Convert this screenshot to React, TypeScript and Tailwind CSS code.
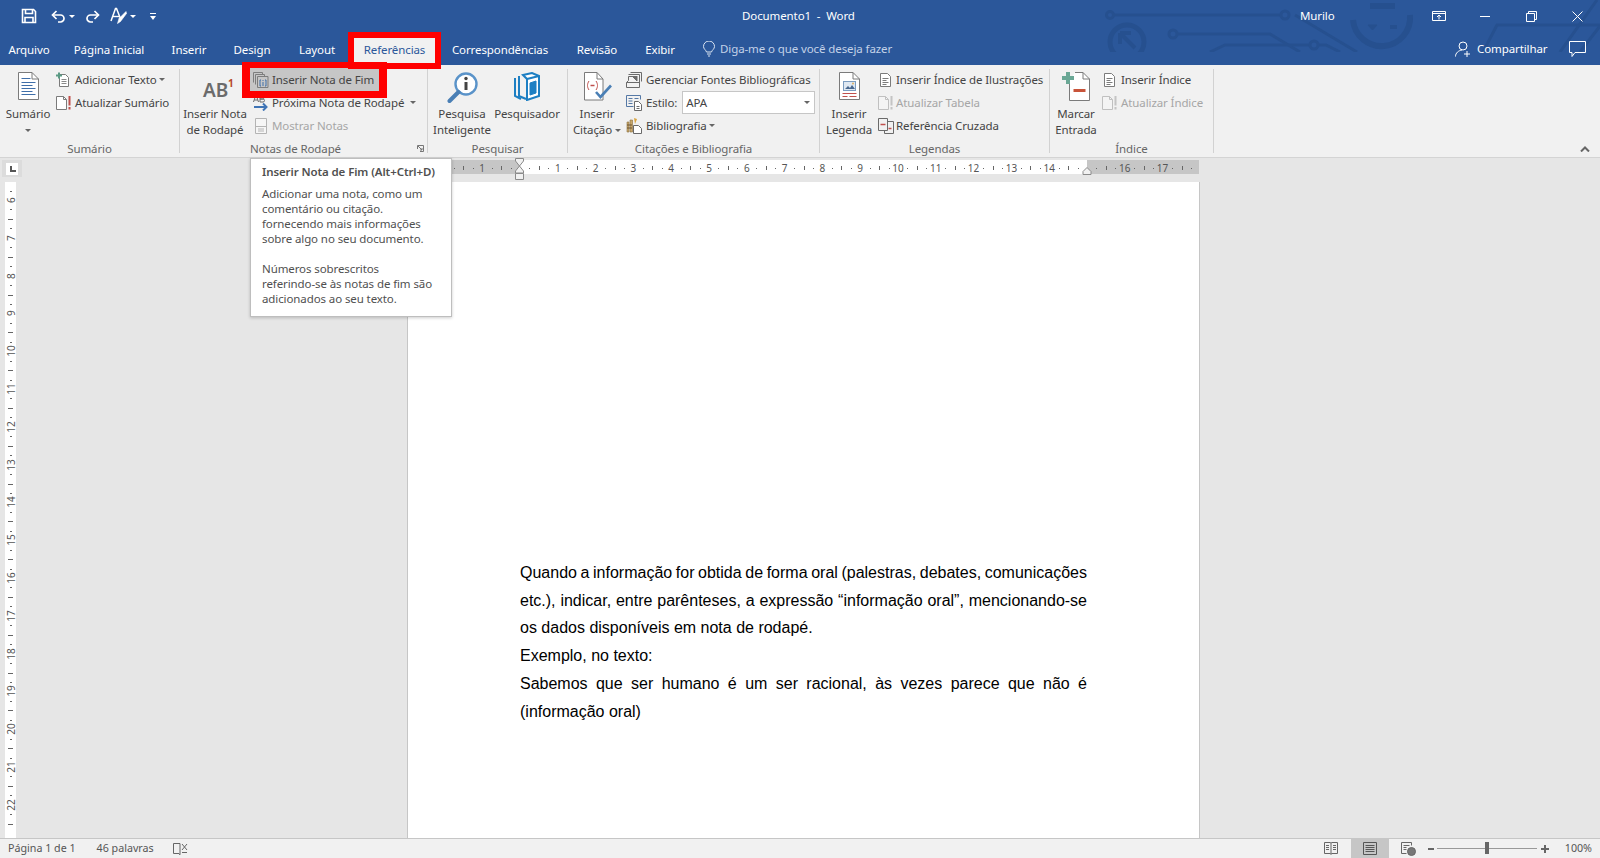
import type { ReactNode } from "react";

const GRAY = "#7b7b7b";

function SaveIcon() {
  return (
    <svg width="16" height="16" viewBox="0 0 16 16" fill="none" stroke="#fff" strokeWidth="1.6">
      <path d="M1.5 1.5h11l2 2v11h-13z" />
      <path d="M4.5 1.5v4h7v-4" />
      <path d="M4 14.5v-5h8v5" />
    </svg>
  );
}

function UndoIcon({ flip }: { flip?: boolean }) {
  return (
    <svg width="15" height="13" viewBox="0 0 15 13" fill="none" stroke="#fff" strokeWidth="1.7" className={flip ? "-scale-x-100" : ""}>
      <path d="M5.5 1 1.5 5l4 4" />
      <path d="M2 5h7.5a3.5 3.5 0 0 1 0 7H7" />
    </svg>
  );
}

function FontBrushIcon() {
  return (
    <svg width="17" height="19" viewBox="0 0 17 19" fill="none" stroke="#fff">
      <path d="M1 14 5.5 1.5h1L11 13" strokeWidth="1.5" />
      <path d="M3 9.5h6" strokeWidth="1.4" />
      <path d="M16 4.5 9 11.5l-1.5 5 3-2 6-8z" fill="#fff" strokeWidth=".6" />
    </svg>
  );
}

function Caret({ color = "#666" }: { color?: string }) {
  return (
    <svg width="6" height="3" viewBox="0 0 6 3" className="shrink-0">
      <path d="M0 0h6L3 3z" fill={color} />
    </svg>
  );
}

function DocIcon({ w = 21, h = 28, children }: { w?: number; h?: number; children?: ReactNode }) {
  return (
    <svg width={w} height={h} viewBox={`0 0 ${w} ${h}`} fill="none">
      <path d={`M.5.5H${w - 7}L${w - 0.5} 7V${h - 0.5}H.5z`} fill="#fff" stroke={GRAY} />
      <path d={`M${w - 7} .5V7H${w - 0.5}`} stroke={GRAY} />
      {children}
    </svg>
  );
}

function SumarioIcon() {
  return (
    <DocIcon>
      <path d="M3.5 6.5h9M3.5 10.5h14M3.5 13.5h11M3.5 16.5h14M3.5 19.5h11M3.5 22.5h14" stroke="#3f6ea8" />
    </DocIcon>
  );
}

function SmallDoc({ children }: { children?: ReactNode }) {
  return (
    <svg width="16" height="16" viewBox="0 0 16 16" fill="none">
      <path d="M3.5 2.5h6l3 3v9h-9z" fill="#fff" stroke={GRAY} />
      <path d="M5.5 7.5h5M5.5 9.5h5M5.5 11.5h5" stroke="#8a8a8a" />
      {children}
    </svg>
  );
}

function AddTextIcon() {
  return (
    <SmallDoc>
      <path d="M0 3.5h6M3 .5v6" stroke="#5a9a84" strokeWidth="2" />
    </SmallDoc>
  );
}

function RefreshDocIcon({ disabled }: { disabled?: boolean }) {
  const line = disabled ? "#c0c0c0" : GRAY;
  return (
    <svg width="16" height="16" viewBox="0 0 16 16" fill="none">
      <path d="M.5 1.5h7l3 3v10H.5z" fill={disabled ? "#f4f4f4" : "#fff"} stroke={line} />
      <path d="M7.5 1.5v3h3" stroke={line} />
      <path d="M13.5 1v9.5M13.5 12v2.5" stroke={disabled ? "#c4c4c4" : "#c0504d"} strokeWidth="2" />
    </svg>
  );
}

function EndnoteIcon() {
  return (
    <svg width="16" height="16" viewBox="0 0 16 16" fill="none">
      <path d="M.5.5h9v2M2.500 2.500h9v2M4.500 4.500h10.500v11h-10.500z" stroke="#7d7d7d" />
      <path d="M.5.5v10M2.500 2.500v10" stroke="#7d7d7d" />
      <path d="M8 8H7v6h1M12 8h1v6h-1" stroke="#3f6ea8" />
      <path d="M10 8v1M10 10v4" stroke="#3f6ea8" />
    </svg>
  );
}

function NextNoteIcon() {
  return (
    <svg width="16" height="16" viewBox="0 0 16 16" fill="none">
      <path d="M.5 7 2.500 1h1L5.500 7M1.300 5h3.400" stroke="#6a6a6a" />
      <path d="M7 1h2.500a1.500 1.500 0 0 1 0 3H7zM7 4h3a1.500 1.500 0 0 1 0 3H7z" stroke="#6a6a6a" />
      <path d="M1 12h12M10 8.500l3.500 3.500-3.500 3.500" stroke="#3f74b5" strokeWidth="2" />
    </svg>
  );
}

function ShowNotesIcon() {
  return (
    <svg width="16" height="16" viewBox="0 0 16 16" fill="none" stroke="#b4b4b4">
      <path d="M2.500.5h11v15h-11z" fill="#f6f6f6" />
      <path d="M2.500 8.500h11M5 11h6M5 13h6" />
    </svg>
  );
}

function SmartLookupIcon() {
  return (
    <svg width="31" height="32" viewBox="0 0 31 32" fill="none">
      <circle cx="19" cy="12" r="10.500" fill="#fff" stroke="#5a93c9" strokeWidth="2.400" />
      <path d="M11.500 20 2.500 29" stroke="#4a7fb5" strokeWidth="4" strokeLinecap="round" />
      <circle cx="19" cy="6.500" r="1.700" fill="#444" />
      <path d="M19 10v8" stroke="#444" strokeWidth="3" />
    </svg>
  );
}

function ResearcherIcon() {
  return (
    <svg width="26" height="29" viewBox="0 0 26 29" fill="none" stroke="#1d7fc3" strokeWidth="2">
      <path d="M1 6v18l6 3" />
      <path d="M5 4v20l7 3" />
      <path d="M9 3 18 1l7 3v20l-12 4V7z" fill="#fff" />
      <path d="M13 7l12-3" />
      <path d="M16 11l6-2v12l-6 2z" fill="#1d7fc3" strokeWidth="1" />
    </svg>
  );
}

function CitationIcon() {
  return (
    <svg width="29" height="29" viewBox="0 0 29 29" fill="none">
      <path d="M1.500.5H14l6 6.500v21H1.500z" fill="#fff" stroke={GRAY} />
      <path d="M14 .5V7h6" stroke={GRAY} />
      <path d="M6 9c-2 3-2 6 0 9M13 9c2 3 2 6 0 9" stroke="#c0504d" />
      <path d="M7.500 13.500h4" stroke="#c0504d" strokeWidth="1.500" />
      <path d="M13 20l4.500 5L28 13.500" stroke="#4a7fb5" strokeWidth="2.600" />
    </svg>
  );
}

function ManageSourcesIcon() {
  return (
    <svg width="16" height="16" viewBox="0 0 16 16" fill="none" stroke="#6a6a6a">
      <path d="M4.500.500h11v9M2.500 2.500h11v9" />
      <path d="M.5 10.500h13v5H.5zM.5 10.500l2-2V4.500h9" />
      <path d="M7 5h4v4z" fill="#6a6a6a" />
    </svg>
  );
}

function StyleIcon() {
  return (
    <svg width="16" height="16" viewBox="0 0 16 16" fill="none">
      <path d="M.5.500h14v4M.5.500v11h7" stroke="#5578a5" />
      <path d="M2.500 3.500h4M2.500 6h4M2.500 8.500h4M8.500 3.500h4" stroke="#5578a5" />
      <path d="M8.500 6.500h4l3 3v6h-7z" fill="#fff" stroke="#6a6a6a" />
      <path d="M10.500 11.500h3M10.500 13.500h3" stroke="#6a6a6a" />
    </svg>
  );
}

function BibliographyIcon() {
  return (
    <svg width="16" height="17" viewBox="0 0 16 17" fill="none">
      <path d="M1 5h2v10H1zM4 3h2.500v12H4z" fill="#c9a86b" stroke="#8a6f3f" strokeWidth=".6" />
      <path d="M8 1l3 1-2 5z" fill="#d9a441" />
      <path d="M1 8h5M1 11h5" stroke="#6b5330" />
      <path d="M7.500 8.500h5l3 3v5h-8z" fill="#fff" stroke="#6a6a6a" />
    </svg>
  );
}

function CaptionIcon() {
  return (
    <DocIcon>
      <rect x="4.500" y="9.500" width="12" height="9" fill="#dfe8f2" stroke="#7c9cc0" />
      <path d="M6 17l3-3 2 2 2-3 3 4z" fill="#47678f" />
      <circle cx="14" cy="11.500" r="1" fill="#e0b060" />
      <path d="M3.500 21.500h14M3.500 24.500h5M10.500 24.500h7" stroke="#c0504d" />
    </DocIcon>
  );
}

function FigureIndexIcon() {
  return (
    <svg width="16" height="16" viewBox="0 0 16 16" fill="none" stroke={GRAY}>
      <path d="M2.500 1.500h7l3 3v10h-10z" fill="#fff" />
      <path d="M4.500 6.500h6M4.500 8.500h4M4.500 10.500h6M4.500 12.500h4" />
    </svg>
  );
}

function CrossRefIcon() {
  return (
    <svg width="16" height="16" viewBox="0 0 16 16" fill="none" stroke="#6a6a6a">
      <path d="M.5.500h9v12H.5z" />
      <path d="M9.500 3.500h6v12h-9v-3" />
      <path d="M2.500 6.500h5" stroke="#c0504d" strokeWidth="1.500" />
      <path d="M10.500 10.500h3" stroke="#c0504d" strokeWidth="1.500" />
    </svg>
  );
}

function MarkEntryIcon() {
  return (
    <svg width="28" height="29" viewBox="0 0 28 29" fill="none">
      <path d="M7.500 8V28.500H27.500V7L21 .5H13" fill="#fff" stroke={GRAY} />
      <path d="M21 .5V7h6.500" stroke={GRAY} />
      <path d="M0 6h12M6 0v12" stroke="#6aa795" strokeWidth="4" />
      <path d="M11.500 18.500h12" stroke="#c8543a" strokeWidth="3" />
    </svg>
  );
}

function LargeButton({ w, icon, lines, caret }: { w: string; icon: ReactNode; lines: string[]; caret?: "inline" | "below" }) {
  return (
    <div className={`${w} flex h-[70px] shrink-0 flex-col items-center`}>
      <div className="flex h-[38px] items-start pt-1">{icon}</div>
      {lines.map((line, i) => (
        <div key={line} className="flex h-4 items-center gap-[3px] whitespace-nowrap leading-4">
          {line}
          {caret === "inline" && i === lines.length - 1 && <Caret />}
        </div>
      ))}
      {caret === "below" && (
        <div className="flex h-4 items-center">
          <Caret />
        </div>
      )}
    </div>
  );
}

function SmallButton({ icon, label, gap, disabled, caret, className }: { icon: ReactNode; label: string; gap: string; disabled?: boolean; caret?: boolean; className?: string }) {
  return (
    <div className={`flex h-[23px] items-center whitespace-nowrap ${disabled ? "text-[#a6a6a6]" : ""} ${className ?? ""}`}>
      <div className="flex w-4 shrink-0 items-center justify-center">{icon}</div>
      <span className={gap}>{label}</span>
      {caret && (
        <span className="ml-[2px]">
          <Caret />
        </span>
      )}
    </div>
  );
}

function Group({ w, label, children, launcher }: { w: string; label: string; children: ReactNode; launcher?: boolean }) {
  return (
    <div className={`${w} flex h-[89px] shrink-0`}>
      <div className="relative flex min-w-0 flex-1 flex-col">
        <div className="flex h-[69px]">{children}</div>
        <div className={`flex h-[20px] items-center justify-center whitespace-nowrap pt-[3px] text-[#666] ${launcher ? "pr-[16px]" : ""}`}>{label}</div>
        {launcher && (
          <svg width="7" height="7" viewBox="0 0 7 7" className="absolute right-[3px] bottom-[5px]" fill="none" stroke="#777">
            <path d="M.5 4V.5H6.500V6.500H3" />
            <path d="M1 1l4 4M5 3v2H3" />
          </svg>
        )}
      </div>
      <div className="mt-[1px] h-[84px] w-px bg-[#d2d2d2]" />
    </div>
  );
}

function Circuit() {
  return (
    <svg width="520" height="52" viewBox="0 0 520 52" fill="none" stroke="#26508f" strokeWidth="3" className="absolute top-0 right-0">
      <circle cx="30" cy="15" r="3.500" />
      <path d="M34 15H201" />
      <circle cx="205" cy="15" r="4" />
      <circle cx="47" cy="42" r="17" strokeWidth="5" />
      <path d="M40 33h11M40 33v11M41 34l14 14" strokeWidth="4" />
      <circle cx="93" cy="34" r="4" />
      <path d="M97 34H190L220 52" />
      <path d="M130 52l15-7H230M238 45h8l14 7" />
      <circle cx="234" cy="45" r="4" />
      <path d="M215 15l62 37" />
      <path d="M273 20a28 28 0 0 0 57-5" strokeWidth="6" />
      <path d="M290 6h25" strokeWidth="6" />
      <path d="M288 25h9l-4.500 5z" fill="#26508f" strokeWidth="1" />
      <path d="M310 27h7" strokeWidth="4" />
      <path d="M403 52l14-27H520" />
      <path d="M480 52 517 0M500 52 520 26" />
    </svg>
  );
}

function HorizontalRuler() {
  const step = 37.8 / 4;
  const marks = Array.from({ length: 79 }, (_, i) => i - 7);
  return (
    <div className="relative mt-[2px] h-[14px] w-[791px] shrink-0">
      <div className="flex h-full">
        <div className="h-full w-[112px] bg-[#c6c6c6]" />
        <div className="h-full w-[567px] bg-white" />
        <div className="h-full w-[112px] bg-[#c6c6c6]" />
      </div>
      {marks.map((k) => {
        const left = 112 + k * step;
        const cm = Math.abs(k) / 4;
        if (k === 0 || k === 60) return null;
        if (k % 4 === 0) {
          return (
            <span key={k} className="absolute top-[1px] w-5 -translate-x-1/2 text-center text-[10px] leading-[14px] tracking-normal text-[#555]" style={{ left }}>
              {cm}
            </span>
          );
        }
        const half = Math.abs(k) % 4 === 2;
        return <span key={k} className={`absolute w-px bg-[#666] ${half ? "top-[6px] h-1" : "top-[8px] h-px"}`} style={{ left }} />;
      })}
      <svg width="12" height="23" viewBox="0 0 12 23" className="absolute top-[-2px] left-[106px]" fill="#f1f1f1" stroke="#8a8a8a">
        <path d="M1.500.5h8V3L5.500 8 1.500 3z" />
        <path d="M5.500 8l4 5v2h-8v-2z" />
        <path d="M1.500 15.500h8v6h-8z" />
      </svg>
      <svg width="12" height="10" viewBox="0 0 12 10" className="absolute top-[7px] left-[673px]" fill="#f1f1f1" stroke="#8a8a8a">
        <path d="M6 .5l4 4v3h-8v-3z" />
      </svg>
    </div>
  );
}

function VerticalRuler() {
  const step = 37.8 / 4;
  const marks = Array.from({ length: 68 }, (_, i) => i - 1);
  return (
    <div className="relative ml-[5px] h-[656px] w-[11px] bg-white">
      {marks.map((k) => {
        const top = 18 + k * step;
        if (k >= 0 && k % 4 === 0) {
          return (
            <span key={k} className="absolute left-0 flex h-[11px] w-[11px] -translate-y-1/2 -rotate-90 items-center justify-center text-[10px] leading-none tracking-normal text-[#555]" style={{ top }}>
              {6 + k / 4}
            </span>
          );
        }
        const half = Math.abs(k) % 4 === 2;
        return <span key={k} className={`absolute h-px bg-[#666] ${half ? "left-[3px] w-[5px]" : "left-[5px] w-[2px]"}`} style={{ top }} />;
      })}
    </div>
  );
}

function Tab({ w, label, active }: { w: string; label: string; active?: boolean }) {
  return (
    <div className={`${w} flex h-full shrink-0 items-center justify-center whitespace-nowrap pb-[3px] ${active ? "bg-[#f1f1f1] text-[#2b579a]" : "text-white"}`}>
      {label}
    </div>
  );
}

export default function App() {
  return (
    <div className="relative flex h-[858px] w-[1600px] flex-col overflow-hidden bg-[#e6e6e6] font-['Noto_Sans',sans-serif] text-[11.5px] tracking-[-0.1px] text-[#444]">
      {/* title bar and tabs */}
      <header className="relative h-[65px] shrink-0 bg-[#2b579a] text-white">
        <Circuit />
        <div className="relative flex h-[36px] items-center pb-[4px]">
          <div className="flex items-center pl-[21px]">
            <SaveIcon />
            <span className="ml-[14px]"><UndoIcon /></span>
            <span className="ml-[3px]"><Caret color="#fff" /></span>
            <span className="ml-[10px]"><UndoIcon flip /></span>
            <span className="ml-[10px]"><FontBrushIcon /></span>
            <span className="ml-[3px]"><Caret color="#fff" /></span>
            <svg width="6" height="7" viewBox="0 0 6 7" className="ml-[14px]" fill="#fff">
              <path d="M0 0h6v1H0zM0 3h6L3 7z" />
            </svg>
          </div>
          <div className="absolute left-[742px] whitespace-pre">Documento1  -  Word</div>
          <div className="absolute left-[1300px]">Murilo</div>
          <svg width="14" height="12" viewBox="0 0 14 12" className="absolute left-[1432px]" fill="none" stroke="#fff">
            <path d="M.5 1.500h13v9H.5zM.5 3.500h13M7 9.500V5M5 7l2-2 2 2" />
          </svg>
          <div className="absolute left-[1480px] h-px w-[10px] bg-white" />
          <svg width="11" height="11" viewBox="0 0 11 11" className="absolute left-[1526px]" fill="none" stroke="#fff">
            <path d="M.5 2.500h8v8h-8zM2.500 2.500v-2h8v8h-2" />
          </svg>
          <svg width="11" height="11" viewBox="0 0 11 11" className="absolute left-[1572px]" fill="none" stroke="#fff">
            <path d="M.5.500l10 10M10.500.500l-10 10" />
          </svg>
        </div>
        <nav className="relative flex h-[29px] items-center pb-[3px]">
          <div className="-mb-[3px] flex h-[27px] self-end">
            <Tab w="w-[58px]" label="Arquivo" />
            <Tab w="w-[102px]" label="Página Inicial" />
            <Tab w="w-[58px]" label="Inserir" />
            <Tab w="w-[68px]" label="Design" />
            <Tab w="w-[62px]" label="Layout" />
            <div className="w-[6px] shrink-0" />
            <Tab w="w-[81px]" label="Referências" active />
            <Tab w="w-[130px]" label="Correspondências" />
            <Tab w="w-[64px]" label="Revisão" />
            <Tab w="w-[62px]" label="Exibir" />
          </div>
          <svg width="12" height="16" viewBox="0 0 12 16" className="ml-[12px]" fill="none" stroke="#dbe5f1">
            <path d="M3.500 11C3 9 .5 8 .5 5.500a5.500 5.500 0 0 1 11 0C11.500 8 9 9 8.500 11zM4 13h4M5 15h2" />
          </svg>
          <span className="ml-[5px] whitespace-nowrap text-[#c3d2e8]">Diga-me o que você deseja fazer</span>
          <svg width="16" height="16" viewBox="0 0 16 16" className="absolute left-[1455px]" fill="none" stroke="#fff">
            <circle cx="8" cy="5" r="4" />
            <path d="M.5 15.500c0-3.500 3-6 6.500-6.500M9 13h6M12 10v6" />
          </svg>
          <span className="absolute left-[1477px] whitespace-nowrap">Compartilhar</span>
          <svg width="17" height="16" viewBox="0 0 17 16" className="absolute left-[1569px]" fill="none" stroke="#fff">
            <path d="M.5.500h16v11H6l-3 4v-4H.5z" />
          </svg>
        </nav>
      </header>

      {/* ribbon */}
      <section className="relative flex h-[93px] shrink-0 items-start border-b border-[#d4d4d4] bg-[#f1f1f1] pt-[3px]">
        <Group w="w-[180px]" label="Sumário">
          <LargeButton w="w-[56px]" icon={<SumarioIcon />} lines={["Sumário"]} caret="below" />
          <div>
            <SmallButton icon={<AddTextIcon />} label="Adicionar Texto" gap="ml-[3px]" caret />
            <SmallButton icon={<RefreshDocIcon />} label="Atualizar Sumário" gap="ml-[3px]" />
          </div>
        </Group>
        <Group w="w-[248px]" label="Notas de Rodapé" launcher>
          <LargeButton
            w="w-[70px]"
            icon={
              <div className="relative ml-[6px] h-[30px] w-[30px] text-[19px] font-semibold leading-[30px] text-[#6b6b6b]">
                <span className="absolute top-[3px] left-0">AB</span>
                <span className="absolute top-[-4px] left-[25px] text-[10px] font-bold text-[#b7472a]">1</span>
              </div>
            }
            lines={["Inserir Nota", "de Rodapé"]}
          />
          <div className="w-[168px]">
            <SmallButton icon={<EndnoteIcon />} label="Inserir Nota de Fim" gap="ml-[3px]" className="w-[130px] bg-[#c6c6c6] pl-[3px]" />
            <div className="flex items-center">
              <SmallButton icon={<NextNoteIcon />} label="Próxima Nota de Rodapé" gap="ml-[3px]" className="pl-[3px]" />
              <span className="ml-auto pr-[2px]"><Caret /></span>
            </div>
            <SmallButton icon={<ShowNotesIcon />} label="Mostrar Notas" gap="ml-[3px]" disabled className="pl-[3px]" />
          </div>
        </Group>
        <Group w="w-[140px]" label="Pesquisar">
          <LargeButton w="w-[68px]" icon={<SmartLookupIcon />} lines={["Pesquisa", "Inteligente"]} />
          <LargeButton w="w-[62px]" icon={<ResearcherIcon />} lines={["Pesquisador"]} />
        </Group>
        <Group w="w-[252px]" label="Citações e Bibliografia">
          <LargeButton w="w-[58px]" icon={<CitationIcon />} lines={["Inserir", "Citação"]} caret="inline" />
          <div>
            <SmallButton icon={<ManageSourcesIcon />} label="Gerenciar Fontes Bibliográficas" gap="ml-1" />
            <div className="flex h-[23px] items-center">
              <div className="flex w-4 justify-center"><StyleIcon /></div>
              <span className="ml-1">Estilo:</span>
              <div className="ml-[5px] flex h-[23px] w-[133px] items-center justify-between border border-[#c6c6c6] bg-white px-[3px]">
                <span>APA</span>
                <span className="pr-[1px]"><Caret /></span>
              </div>
            </div>
            <SmallButton icon={<BibliographyIcon />} label="Bibliografia" gap="ml-1" caret />
          </div>
        </Group>
        <Group w="w-[230px]" label="Legendas">
          <LargeButton w="w-[58px]" icon={<CaptionIcon />} lines={["Inserir", "Legenda"]} />
          <div>
            <SmallButton icon={<FigureIndexIcon />} label="Inserir Índice de Ilustrações" gap="ml-[2px]" />
            <SmallButton icon={<RefreshDocIcon disabled />} label="Atualizar Tabela" gap="ml-[2px]" disabled />
            <SmallButton icon={<CrossRefIcon />} label="Referência Cruzada" gap="ml-[2px]" />
          </div>
        </Group>
        <Group w="w-[164px]" label="Índice">
          <LargeButton w="w-[52px]" icon={<MarkEntryIcon />} lines={["Marcar", "Entrada"]} />
          <div>
            <SmallButton icon={<FigureIndexIcon />} label="Inserir Índice" gap="ml-[3px]" />
            <SmallButton icon={<RefreshDocIcon disabled />} label="Atualizar Índice" gap="ml-[3px]" disabled />
          </div>
        </Group>
        <svg width="10" height="6" viewBox="0 0 10 6" className="absolute right-[10px] bottom-[5px]" fill="none" stroke="#666" strokeWidth="2">
          <path d="M1 5.500 5 1.500l4 4" />
        </svg>
      </section>

      {/* document area */}
      <main className="flex min-h-0 flex-1">
        <div className="w-[408px] shrink-0">
          <div className="h-[24px] pt-[2px]">
            <div className="ml-[2px] flex h-[17px] w-[20px] items-center justify-center bg-[#dcdcdc]">
              <div className="flex h-[12px] w-[12px] items-center justify-center bg-white">
                <div className="mt-[1px] ml-[1px] h-[6px] w-[6px] border-b-2 border-l-2 border-[#555]" />
              </div>
            </div>
          </div>
          <VerticalRuler />
        </div>
        <div className="flex w-[792px] shrink-0 flex-col">
          <HorizontalRuler />
          <div className="mt-[8px] -ml-px flex-1 border-x border-[#c6c6c6] bg-white pt-[377px] pr-[112px] pl-[112px] font-['Liberation_Sans',sans-serif] text-[16px] leading-[27.7px] tracking-normal text-black">
            <div className="whitespace-nowrap [text-align-last:justify] [word-spacing:-2px]">Quando a informação for obtida de forma oral (palestras, debates, comunicações</div>
            <div className="whitespace-nowrap [text-align-last:justify] [word-spacing:-2px]">etc.), indicar, entre parênteses, a expressão “informação oral”, mencionando-se</div>
            <div>os dados disponíveis em nota de rodapé.</div>
            <div>Exemplo, no texto:</div>
            <p className="text-justify">Sabemos que ser humano é um ser racional, às vezes parece que não é (informação oral)</p>
          </div>
        </div>
      </main>

      {/* status bar */}
      <footer className="relative flex h-[20px] shrink-0 items-center border-t border-[#c6c6c6] bg-[#f1f1f1] text-[10.7px] tracking-normal text-[#555]">
        <span className="ml-[8px]">Página 1 de 1</span>
        <span className="ml-[21px]">46 palavras</span>
        <svg width="15" height="14" viewBox="0 0 15 14" className="ml-[19px]" fill="none" stroke="#666">
          <path d="M7 1.500H.5v10H6l1 1.500M7 1.500v11" />
          <path d="M9 2l5 6M14 2L9 8M9 10.500h5" />
        </svg>
        <div className="ml-auto flex h-full items-center">
          <svg width="14" height="13" viewBox="0 0 14 13" fill="none" stroke="#666">
            <path d="M.5.500h6l.5 1 .5-1h6v11h-6l-.5 1-.5-1h-6zM7 1.500v10M2 3.500h3M2 5.500h3M2 7.500h3M9 3.500h3M9 5.500h3M9 7.500h3" />
          </svg>
          <div className="ml-[13px] flex h-full w-[38px] items-center justify-center bg-[#c6c6c6]">
            <svg width="14" height="13" viewBox="0 0 14 13" fill="none" stroke="#555">
              <path d="M.5.500h13v12H.5zM2.500 3.500h9M2.500 5.500h9M2.500 7.500h9M2.500 9.500h9" />
            </svg>
          </div>
          <svg width="15" height="14" viewBox="0 0 15 14" className="ml-[12px]" fill="none" stroke="#666">
            <path d="M.5.500h10v3M.5.500v11h5M2.500 3.500h6M2.500 5.500h3M2.500 7.500h3" />
            <circle cx="10.500" cy="9.500" r="4" fill="#777" />
          </svg>
          <div className="ml-[12px] h-[2px] w-[6px] bg-[#666]" />
          <div className="relative ml-[3px] h-px w-[100px] bg-[#999]">
            <div className="absolute top-[-6px] left-[48px] h-[12px] w-[4px] bg-[#666]" />
          </div>
          <svg width="8" height="8" viewBox="0 0 8 8" className="ml-[4px]" stroke="#666" strokeWidth="2">
            <path d="M0 4h8M4 0v8" />
          </svg>
          <span className="mr-[8px] ml-[16px]">100%</span>
        </div>
      </footer>

      {/* tooltip over the ribbon */}
      <div className="absolute top-[158px] left-[250px] h-[159px] w-[202px] border border-[#bebebe] bg-white pt-[5px] pl-[11px] leading-[15px] text-[#505050] shadow-[0_1px_3px_rgba(0,0,0,0.2)]">
        <div className="font-semibold whitespace-nowrap">Inserir Nota de Fim (Alt+Ctrl+D)</div>
        <div className="mt-[7px] whitespace-nowrap">
          Adicionar uma nota, como um<br />
          comentário ou citação.<br />
          fornecendo mais informações<br />
          sobre algo no seu documento.
        </div>
        <div className="mt-[15px] whitespace-nowrap">
          Números sobrescritos<br />
          referindo-se às notas de fim são<br />
          adicionados ao seu texto.
        </div>
      </div>

      {/* red highlights from the tutorial */}
      <div className="pointer-events-none absolute top-[32px] left-[348px] h-[37px] w-[93px] border-[6px] border-[#ff0000]" />
      <div className="pointer-events-none absolute top-[62px] left-[242px] h-[36px] w-[145px] border-x-[8px] border-t-[6px] border-b-[7px] border-[#ff0000]" />
    </div>
  );
}
